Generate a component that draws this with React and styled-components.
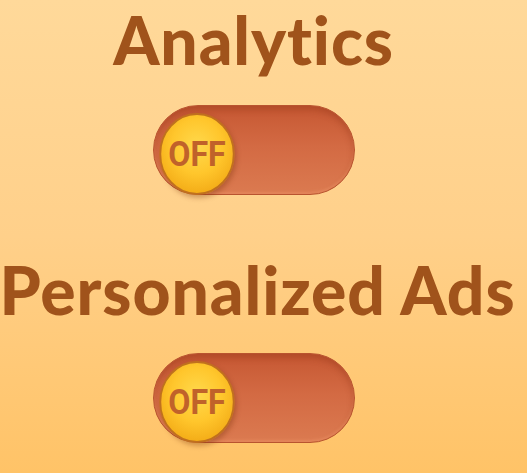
import React from 'react'
import styled, { createGlobalStyle } from 'styled-components'

const GlobalStyle = createGlobalStyle`
  html, body {
    margin: 0;
    padding: 0;
  }
  body {
    width: 527px;
    height: 473px;
    overflow: hidden;
    background: linear-gradient(180deg, #ffd99a 0%, #ffd08a 50%, #ffc367 100%);
  }
`

function Toggle({ on, gap }) {
  return (
    <Track $gap={gap}>
      <Knob>{on ? 'ON' : 'OFF'}</Knob>
    </Track>
  )
}

export default function App() {
  return (
    <>
      <GlobalStyle />
      <Page>
        <Title $top={0} $shift={20}>Analytics</Title>
        <Toggle gap={25} />
        <Title $top={55} $shift={12}>Personalized Ads</Title>
        <Toggle gap={23} />
      </Page>
    </>
  )
}

const Page = styled.div`
  width: 527px;
  height: 473px;
  display: flex;
  flex-direction: column;
  align-items: center;
`

const Title = styled.h1`
  margin: ${(props) => props.$top}px ${(props) => props.$shift}px 0 0;
  font-family: Lato, sans-serif;
  font-weight: 900;
  font-size: 66px;
  line-height: 80px;
  letter-spacing: 0.9px;
  color: #a0531b;
  white-space: nowrap;
`

const Track = styled.div`
  margin: ${(props) => props.$gap}px 19px 0 0;
  width: 202px;
  height: 90px;
  box-sizing: border-box;
  padding: 0 0 0 2px;
  border-radius: 45px;
  display: flex;
  align-items: flex-end;
  background: linear-gradient(180deg, #c65833 0%, #d36a43 45%, #db7a50 100%);
  border: 1px solid #b9542f;
  box-shadow: inset 0 4px 6px rgba(140, 50, 20, 0.35), inset 0 -2px 3px rgba(255, 170, 120, 0.35);
`

const Knob = styled.div`
  width: 82px;
  height: 82px;
  margin-bottom: -1px;
  box-sizing: border-box;
  border-radius: 50%;
  display: flex;
  align-items: center;
  justify-content: center;
  background: radial-gradient(circle at 50% 40%, #ffd94c 0%, #ffc62c 45%, #f3ab16 80%, #e69410 100%);
  border: 2px solid #c0701e;
  box-shadow: 2px 3px 5px rgba(120, 50, 10, 0.35);
  font-family: Roboto, sans-serif;
  font-weight: 700;
  font-size: 35px;
  color: #c0622a;
  transform: scaleX(0.92);
`
